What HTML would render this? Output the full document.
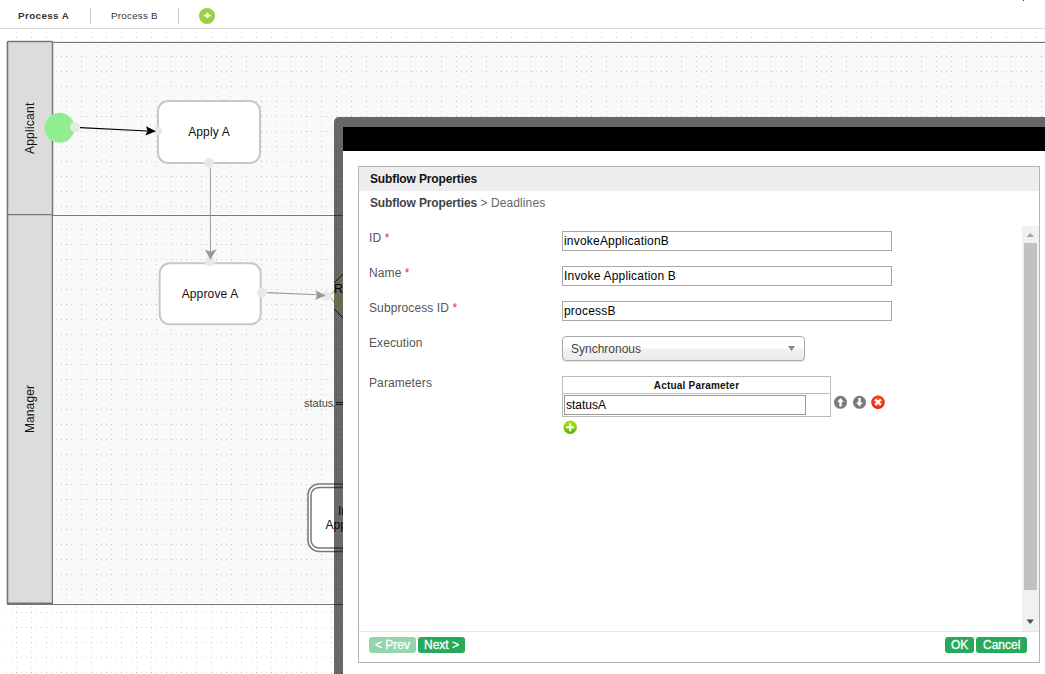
<!DOCTYPE html>
<html><head><meta charset="utf-8">
<style>
*{box-sizing:border-box}
html,body{margin:0;padding:0;width:1045px;height:674px;overflow:hidden;background:#fff;font-family:"Liberation Sans",sans-serif}
.a{position:absolute;white-space:pre}
svg.bg{position:absolute;left:0;top:0}
.lbl{position:absolute;font-size:12px;line-height:12px;color:#555;left:369px;letter-spacing:0.1px}
.req{color:#ee2452}
.inp{position:absolute;left:562px;width:330px;height:20px;border:1px solid #a9a9a9;background:#fff;font-size:12px;line-height:12px;color:#000;padding:0}
.inp span{position:absolute;left:1px;top:3px;letter-spacing:0.2px}
.btn{position:absolute;top:637px;height:16px;border-radius:3px;background:#27a95b;color:#fff;font-size:12px;line-height:12px}
.btn span{position:absolute;top:2px;-webkit-text-stroke:0.3px #fff}
</style></head><body>

<!-- header tabs -->
<div class="a" style="left:1023px;top:0;width:1px;height:1px;background:#7a1a80;z-index:5"></div>
<div class="a" style="left:0;top:0;width:1045px;height:28px;background:#fff"></div>
<div class="a" style="left:18px;top:11px;font-size:9.8px;line-height:10px;font-weight:bold;color:#333;letter-spacing:0.4px">Process A</div>
<div class="a" style="left:90px;top:8px;width:1px;height:16px;background:#ccc"></div>
<div class="a" style="left:111px;top:11px;font-size:9.8px;line-height:10px;color:#333;letter-spacing:0.25px">Process B</div>
<div class="a" style="left:178px;top:8px;width:1px;height:16px;background:#ccc"></div>
<svg class="a" style="left:199px;top:8px" width="16" height="16"><circle cx="8" cy="8" r="8" fill="#a0cf42"/><rect x="5" y="6.8" width="7" height="1.6" fill="#fff"/><rect x="7.2" y="4.9" width="2.4" height="5" fill="#fff"/></svg>
<div class="a" style="left:0;top:28px;width:1045px;height:1px;background:#d9d9d9"></div>

<svg class="bg" width="1045" height="674" style="top:0">
  <defs>
    <pattern id="gout" x="1" y="12" width="15" height="15" patternUnits="userSpaceOnUse">
      <rect x="0" y="0" width="1" height="1" fill="#b6b6b6"/>
      <rect x="5" y="0" width="1" height="1" fill="#d9d9d9"/>
      <rect x="10" y="0" width="1" height="1" fill="#d9d9d9"/>
      <rect x="0" y="5" width="1" height="1" fill="#d9d9d9"/>
      <rect x="0" y="10" width="1" height="1" fill="#d9d9d9"/>
    </pattern>
    <pattern id="gin" x="6" y="11" width="15" height="15" patternUnits="userSpaceOnUse">
      <rect x="0" y="0" width="15" height="15" fill="#f9f9f9"/>
      <rect x="0" y="0" width="1" height="1" fill="#b6b6b6"/>
      <rect x="5" y="0" width="1" height="1" fill="#d6d6d6"/>
      <rect x="10" y="0" width="1" height="1" fill="#d6d6d6"/>
      <rect x="0" y="5" width="1" height="1" fill="#d6d6d6"/>
      <rect x="0" y="10" width="1" height="1" fill="#d6d6d6"/>
    </pattern>
    <pattern id="gin2" x="6" y="214" width="15" height="15" patternUnits="userSpaceOnUse">
      <rect x="0" y="0" width="15" height="15" fill="#f9f9f9"/>
      <rect x="0" y="0" width="1" height="1" fill="#b6b6b6"/>
      <rect x="5" y="0" width="1" height="1" fill="#d6d6d6"/>
      <rect x="10" y="0" width="1" height="1" fill="#d6d6d6"/>
      <rect x="0" y="5" width="1" height="1" fill="#d6d6d6"/>
      <rect x="0" y="10" width="1" height="1" fill="#d6d6d6"/>
    </pattern>
    <marker id="ab" markerWidth="12" markerHeight="10" refX="11" refY="5" orient="auto" markerUnits="userSpaceOnUse">
      <path d="M0,0 L11,5 L0,10 L3,5 Z" fill="#000"/>
    </marker>
    <marker id="ag" markerWidth="12" markerHeight="10" refX="11" refY="5" orient="auto" markerUnits="userSpaceOnUse">
      <path d="M0,0 L11,5 L0,10 L3,5 Z" fill="#999"/>
    </marker>
  </defs>
  <rect x="5" y="29" width="1040" height="645" fill="url(#gout)"/>
  <!-- pool -->
  <rect x="7.5" y="42.5" width="1100" height="561" fill="url(#gin)" stroke="#777" stroke-width="1.3"/>
  <rect x="53" y="43" width="1000" height="1" fill="#fff"/>
  <rect x="53" y="214" width="1000" height="1" fill="#fff"/>
  <rect x="53" y="216" width="1000" height="1" fill="#fff"/>
  <rect x="7.5" y="41.5" width="45" height="562" fill="#dcdcdc" stroke="#777" stroke-width="1.5" rx="1"/>
  <rect x="53" y="216" width="1000" height="388" fill="url(#gin2)"/>
  <line x1="53" y1="215.5" x2="1045" y2="215.5" stroke="#777" stroke-width="1.2"/>
  <line x1="7" y1="214.6" x2="53" y2="214.6" stroke="#777" stroke-width="1.2"/>
  <rect x="53" y="603" width="1000" height="1" fill="#fff"/>
  <line x1="7" y1="603.6" x2="53" y2="603.6" stroke="#6e6e6e" stroke-width="1.6"/>
  <line x1="7" y1="604.5" x2="1045" y2="604.5" stroke="#777" stroke-width="1.1"/>
  <text x="33.6" y="128.3" transform="rotate(-90 33.6 128.3)" text-anchor="middle" font-family="Liberation Sans" font-size="12" letter-spacing="0.25" fill="#111">Applicant</text>
  <text x="33.6" y="409" transform="rotate(-90 33.6 409)" text-anchor="middle" font-family="Liberation Sans" font-size="12" letter-spacing="0.1" fill="#111">Manager</text>

  <!-- start event -->
  <circle cx="59.5" cy="127.8" r="15" fill="#90ee90"/>
  <circle cx="75" cy="127" r="5" fill="#e8e8e8"/>
  <line x1="80" y1="127.6" x2="148" y2="131" stroke="#000" stroke-width="1.1"/>

  <!-- Apply A -->
  <rect x="158" y="101" width="102" height="62" rx="10" fill="#fff" stroke="#c8c8c8" stroke-width="2"/>
  <text x="209" y="136" text-anchor="middle" font-family="Liberation Sans" font-size="12" letter-spacing="0.15" fill="#111">Apply A</text>
  <circle cx="157.8" cy="131" r="4.2" fill="#e8e8e8"/>
  <path d="M156,131.3 L146,126.2 L147.6,131 L145.3,135.6 Z" fill="#000"/>
  <circle cx="209" cy="163" r="5" fill="#e8e8e8"/>
  <line x1="210.4" y1="168" x2="210.4" y2="252" stroke="#9a9a9a" stroke-width="1"/>

  <!-- Approve A -->
  <rect x="159.7" y="263.3" width="101" height="61" rx="10" fill="#fff" stroke="#c8c8c8" stroke-width="2"/>
  <text x="210" y="298" text-anchor="middle" font-family="Liberation Sans" font-size="12" letter-spacing="0.15" fill="#111">Approve A</text>
  <circle cx="209.8" cy="261.4" r="5" fill="#e8e8e8"/>
  <path d="M210.4,259.8 L205,249.5 L210.4,251.8 L216.5,249.2 Z" fill="#999"/>
  <circle cx="261.9" cy="292.9" r="4.8" fill="#e8e8e8"/>
  <line x1="267" y1="292.6" x2="318" y2="294.8" stroke="#9a9a9a" stroke-width="1.1"/>

  <!-- gateway (mostly hidden) -->
  <polygon points="329.6,296 334.3,290.5 334.3,282.8 343,274.2 350,274 350,318 343,318 334.3,308.9 334.3,302.6" fill="#ffffcc"/>
  <path d="M329.6,296 L334.5,290.3 M329.6,296 L334.5,302.8" stroke="#9a9a9a" stroke-width="1" fill="none"/>
  <path d="M334.3,282.8 L343,274.2 M334.3,308.9 L343,318" stroke="#222" stroke-width="1" fill="none"/>
  <circle cx="326.5" cy="295.9" r="4.6" fill="#e8e8e8"/>
  <path d="M325.8,295.5 L315.3,290.2 L317.2,294.6 L315.3,299.8 Z" fill="#999"/>
  <text x="334" y="293" font-family="Liberation Sans" font-size="12.5" fill="#000">Ro</text>

  <clipPath id="cl1"><rect x="0" y="380" width="334" height="40"/></clipPath>
  <text x="304" y="407" font-family="Liberation Sans" font-size="11" fill="#444" clip-path="url(#cl1)">statusA</text>

  <!-- subflow -->
  <rect x="308" y="484" width="80" height="67.5" rx="11" fill="#fff" stroke="#777" stroke-width="1.5"/>
  <rect x="311" y="487.5" width="80" height="60.5" rx="8" fill="none" stroke="#777" stroke-width="1.5"/>
  <text x="338" y="515" font-family="Liberation Sans" font-size="12" fill="#111">Invoke</text>
  <text x="325.5" y="529" font-family="Liberation Sans" font-size="12" fill="#111">Application B</text>
</svg>

<!-- modal frame -->
<div class="a" style="left:334px;top:117px;width:800px;height:700px;background:rgba(0,0,0,0.59);border-radius:5px"></div>
<div class="a" style="left:343px;top:127px;width:800px;height:24px;background:#000"></div>
<div class="a" style="left:343px;top:151px;width:800px;height:600px;background:#fff"></div>

<div class="a" style="left:336px;top:402px;width:6.5px;height:1px;background:#111"></div>
<div class="a" style="left:336px;top:404px;width:6.5px;height:1px;background:#111"></div>
<!-- panel -->
<div class="a" style="left:358px;top:166px;width:682px;height:497px;border:1px solid #b4b4b4;background:#fff"></div>
<div class="a" style="left:359px;top:167px;width:680px;height:24px;background:#eee"></div>
<div class="a" style="left:370px;top:173px;font-size:12px;line-height:12px;font-weight:bold;color:#111;letter-spacing:-0.13px">Subflow Properties</div>
<div class="a" style="left:370px;top:197px;font-size:12px;line-height:12px;color:#666"><b style="color:#444;letter-spacing:-0.13px">Subflow Properties</b><span style="letter-spacing:0.1px"> &gt; Deadlines</span></div>

<div class="lbl" style="top:232px">ID <span class="req">*</span></div>
<div class="lbl" style="top:267px">Name <span class="req">*</span></div>
<div class="lbl" style="top:302px">Subprocess ID <span class="req">*</span></div>
<div class="lbl" style="top:337px">Execution</div>
<div class="lbl" style="top:377px">Parameters</div>

<div class="inp" style="top:231px"><span>invokeApplicationB</span></div>
<div class="inp" style="top:266px"><span>Invoke Application B</span></div>
<div class="inp" style="top:301px"><span>processB</span></div>

<div class="a" style="left:562px;top:336px;width:243px;height:25px;border:1px solid #aaa;border-radius:4px;background:linear-gradient(#fff 0%,#fff 45%,#f1f1f1 55%,#ebebeb 100%);box-shadow:0 1px 1px rgba(0,0,0,0.12)">
  <span class="a" style="left:8px;top:6px;font-size:12px;line-height:12px;color:#444">Synchronous</span>
  <svg class="a" style="left:225px;top:9px" width="8" height="6"><path d="M0,0 L7,0 L3.5,5 Z" fill="#888"/></svg>
</div>

<!-- parameters table -->
<div class="a" style="left:562px;top:376px;width:269px;height:41px;border:1px solid #bbb"></div>
<div class="a" style="left:563px;top:393px;width:267px;height:1px;background:#bbb"></div>
<div class="a" style="left:563px;width:267px;text-align:center;top:381px;font-size:10px;line-height:10px;font-weight:bold;color:#111;letter-spacing:0.2px">Actual Parameter</div>
<div class="a" style="left:564px;top:395px;width:242px;height:20px;border:1px solid #999;background:#fff"><span class="a" style="left:1px;top:3px;font-size:12px;line-height:12px;color:#000">statusA</span></div>

<svg class="a" style="left:832px;top:394px" width="56" height="17">
  <defs>
    <radialGradient id="rg" cx="50%" cy="45%" r="55%"><stop offset="0" stop-color="#f86a22"/><stop offset="0.6" stop-color="#f24a1c"/><stop offset="1" stop-color="#e10a0c"/></radialGradient>
    <linearGradient id="gg" x1="0" y1="0" x2="0" y2="1"><stop offset="0" stop-color="#a8e600"/><stop offset="0.55" stop-color="#84cc10"/><stop offset="1" stop-color="#5aa80e"/></linearGradient>
  </defs>
  <circle cx="8.5" cy="8.3" r="6.5" fill="#7b7b7b"/>
  <path d="M8.5,4 L11.9,8 L9.7,8 L9.7,12.6 L7.3,12.6 L7.3,8 L5.1,8 Z" fill="#fff"/>
  <circle cx="27.5" cy="8.3" r="6.5" fill="#7b7b7b"/>
  <path d="M27.5,12.6 L30.9,8.6 L28.7,8.6 L28.7,4 L26.3,4 L26.3,8.6 L24.1,8.6 Z" fill="#fff"/>
  <circle cx="46" cy="8.3" r="6.7" fill="url(#rg)"/>
  <path d="M43.2,5.5 L48.8,11.1 M48.8,5.5 L43.2,11.1" stroke="#fff" stroke-width="2.1"/>
</svg>
<svg class="a" style="left:562px;top:419px" width="16" height="16">
  <circle cx="8.2" cy="8.3" r="6.7" fill="url(#gg)"/>
  <rect x="4.2" y="7.3" width="8" height="2" fill="#fff"/><rect x="7.2" y="4.3" width="2" height="8" fill="#fff"/>
</svg>

<!-- scrollbar -->
<div class="a" style="left:1022px;top:226px;width:17px;height:405px;background:#f1f1f1"></div>
<div class="a" style="left:1024px;top:243px;width:13px;height:347px;background:#c1c1c1"></div>
<svg class="a" style="left:1026px;top:232px" width="9" height="6"><path d="M0.5,5 L8,5 L4.25,1 Z" fill="#a3a3a3"/></svg>
<svg class="a" style="left:1026px;top:619px" width="9" height="6"><path d="M0.5,0.5 L8,0.5 L4.25,5 Z" fill="#505050"/></svg>

<!-- footer -->
<div class="a" style="left:359px;top:631px;width:680px;height:1px;background:#e6e6e6"></div>
<div class="btn" style="left:369px;width:47px;background:#94d5ac"><span style="left:6px">&lt; Prev</span></div>
<div class="btn" style="left:418px;width:47px"><span style="left:6px">Next &gt;</span></div>
<div class="btn" style="left:945px;width:29px"><span style="left:6px">OK</span></div>
<div class="btn" style="left:976px;width:51px"><span style="left:7px">Cancel</span></div>

</body></html>
